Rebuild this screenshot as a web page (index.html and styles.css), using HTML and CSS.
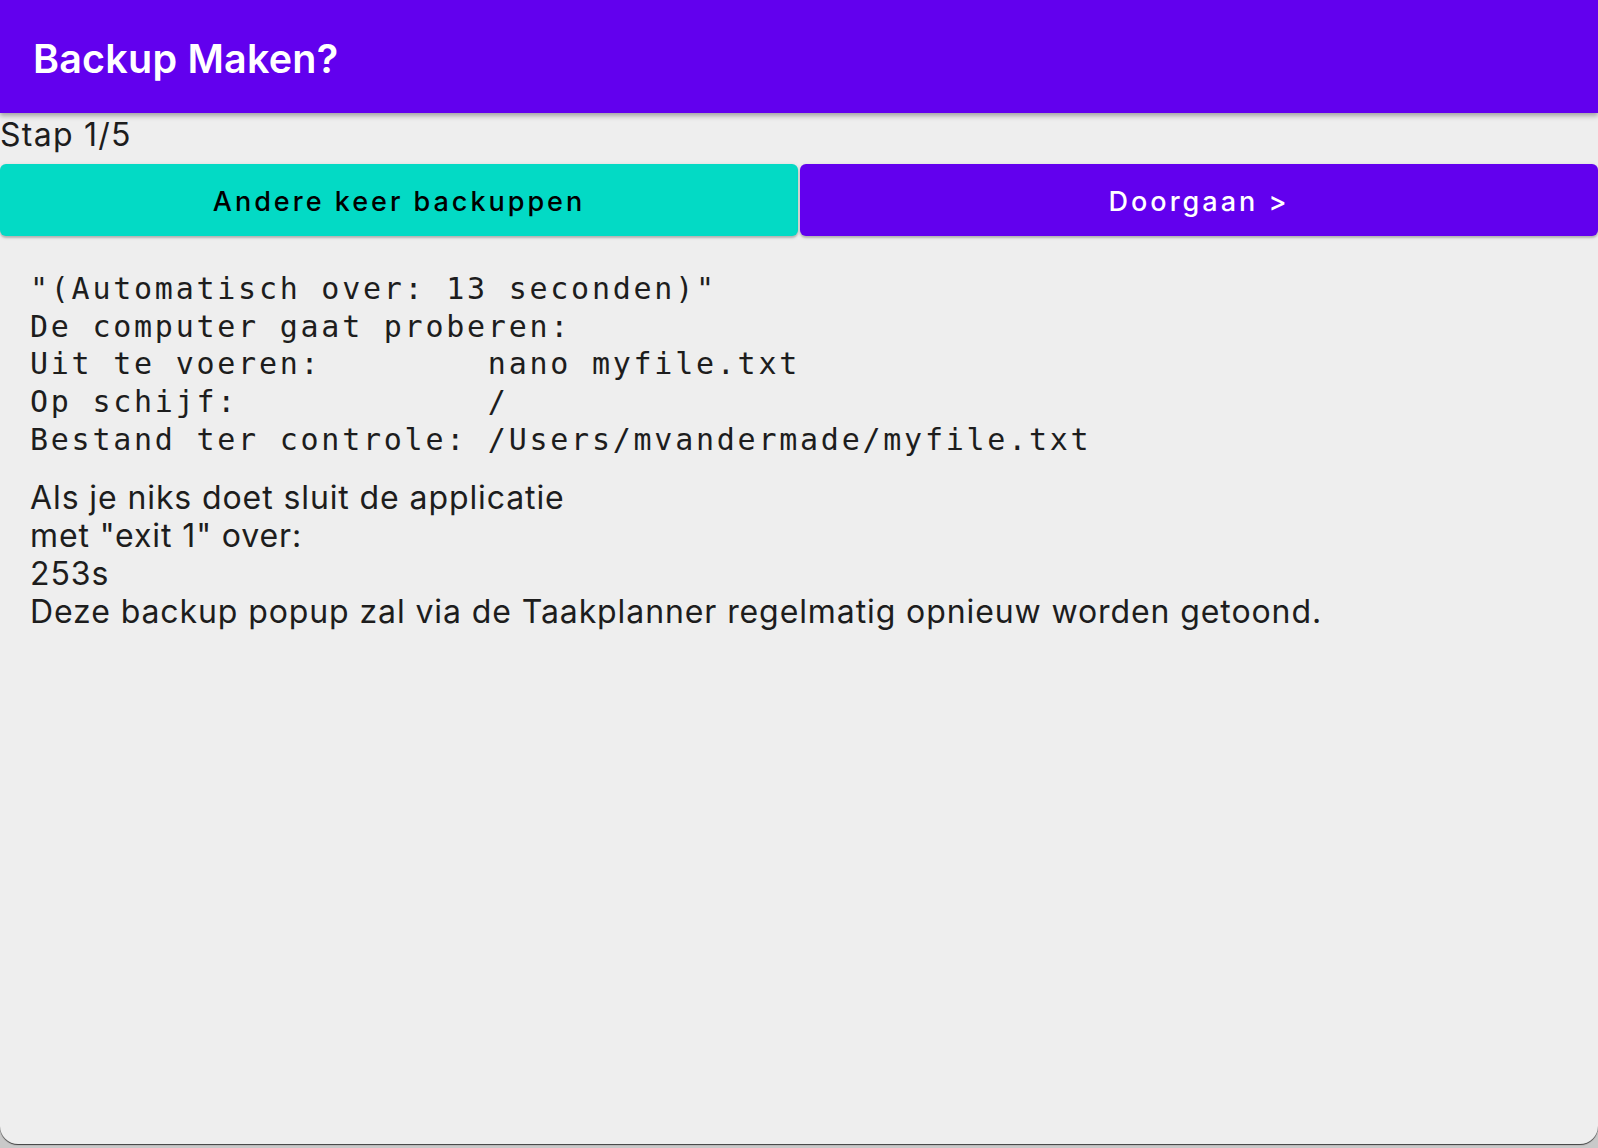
FILE: index.html
```html
<!DOCTYPE html>
<html lang="nl">
<head>
<meta charset="utf-8">
<title>Backup Maken?</title>
<link rel="stylesheet" href="styles.css">
</head>
<body>
<div class="window">
  <header class="appbar">
    <h1 class="title">Backup Maken?</h1>
  </header>
  <div class="step">Stap 1/5</div>
  <div class="actions">
    <button class="btn btn-secondary">Andere keer backuppen</button>
    <button class="btn btn-primary">Doorgaan &gt;</button>
  </div>
  <main class="content">
    <pre class="mono">"(Automatisch over: 13 seconden)"
De computer gaat proberen:
Uit te voeren:        nano myfile.txt
Op schijf:            /
Bestand ter controle: /Users/mvandermade/myfile.txt</pre>
    <div class="info">
      <p>Als je niks doet sluit de applicatie</p>
      <p>met "exit 1" over:</p>
      <p>253s</p>
      <p>Deze backup popup zal via de Taakplanner regelmatig opnieuw worden getoond.</p>
    </div>
  </main>
</div>
</body>
</html>
```
FILE: styles.css
```css
html, body {
  margin: 0;
  padding: 0;
}
body {
  background: #c9c9c9;
  height: 1148px;
  overflow: hidden;
  font-family: Inter, Roboto, "Liberation Sans", sans-serif;
  color: #1d1d1d;
}
.window {
  height: 1144px;
  background: #eeeeee;
  border-radius: 0 0 18px 18px;
  box-shadow: 0 1px 1px rgba(0,0,0,0.7);
  overflow: hidden;
  display: flex;
  flex-direction: column;
}
.appbar {
  height: 113px;
  flex: none;
  background: #6200ee;
  display: flex;
  align-items: center;
  padding-left: 33px;
  box-shadow: 0 2px 4px rgba(0,0,0,0.2), 0 4px 5px rgba(0,0,0,0.14);
  position: relative;
  z-index: 1;
}
.title {
  margin: 0;
  font-size: 39.5px;
  font-weight: 600;
  color: #ffffff;
  letter-spacing: 0.2px;
  padding-top: 5px;
}
.step {
  font-size: 32px;
  line-height: 40px;
  margin-top: 2px;
  letter-spacing: 1.25px;
}
.actions {
  display: flex;
  gap: 2px;
  margin-top: 9px;
  height: 72px;
}
.btn {
  flex: 1;
  border: none;
  border-radius: 6px;
  font-family: Inter, Roboto, "Liberation Sans", sans-serif;
  font-size: 27px;
  font-weight: 500;
  letter-spacing: 3px;
  box-shadow: 0 2px 2px rgba(0,0,0,0.18), 0 1px 4px rgba(0,0,0,0.12);
  cursor: pointer;
  padding: 2px 0 0 0;
}
.btn-secondary {
  background: #03dac5;
  color: #000000;
}
.btn-primary {
  background: #6200ee;
  color: #ffffff;
}
.content {
  padding: 34px 30px 0 30px;
}
.mono {
  margin: 0;
  font-family: "DejaVu Sans Mono", "Liberation Mono", monospace;
  font-size: 30px;
  line-height: 37.7px;
  letter-spacing: 2.75px;
  color: #1d1d1d;
}
.info {
  margin-top: 20px;
  font-size: 32px;
  line-height: 38px;
  letter-spacing: 0.9px;
}
.info p {
  margin: 0;
}
```
